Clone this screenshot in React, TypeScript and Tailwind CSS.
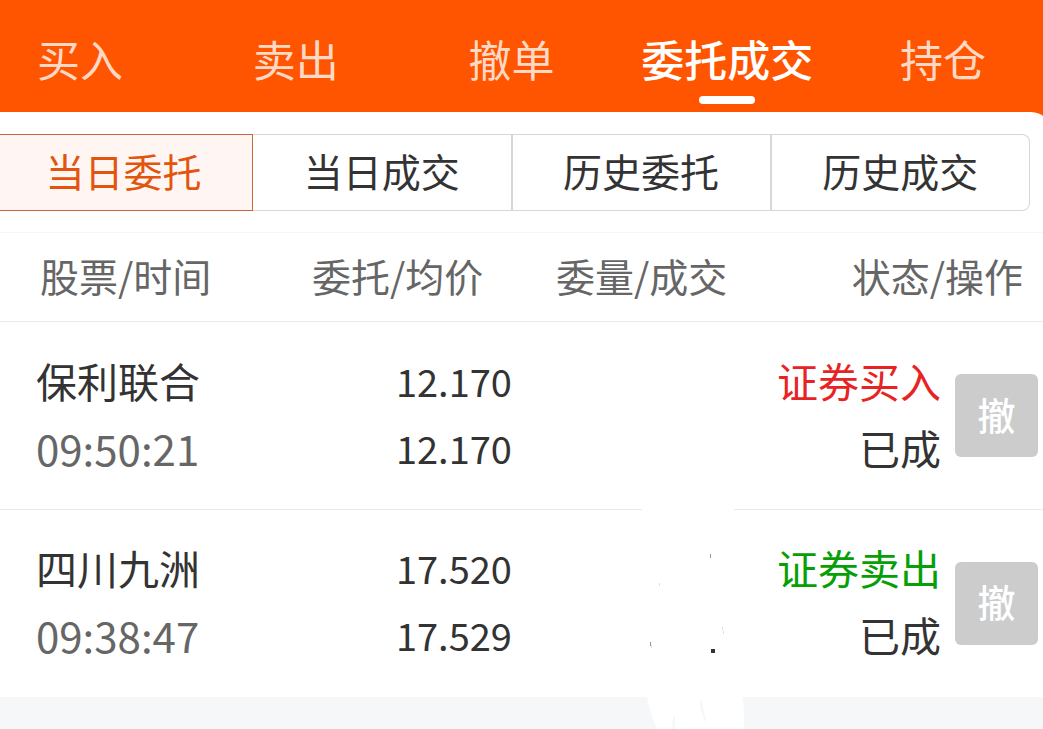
import clsx from 'clsx'

const tabs = ['买入', '卖出', '撤单', '委托成交', '持仓']
const subTabs = ['当日委托', '当日成交', '历史委托', '历史成交']

const orders = [
  {
    name: '保利联合',
    time: '09:50:21',
    price: '12.170',
    average: '12.170',
    side: '证券买入',
    buy: true,
    status: '已成',
    smudged: false,
  },
  {
    name: '四川九洲',
    time: '09:38:47',
    price: '17.520',
    average: '17.529',
    side: '证券卖出',
    buy: false,
    status: '已成',
    smudged: true,
  },
]

export default function App() {
  return (
    <div className="flex min-h-screen flex-col overflow-hidden bg-[#f6f7f9] font-['Noto_Sans_CJK_SC',sans-serif] text-[#333]">
      <TopTabs />
      <main className="bg-[#ff5500]">
        <div className="-mr-2 rounded-tr-[20px] bg-white pt-[22px] pr-2">
          <SubTabs />
          <OrderTable />
        </div>
      </main>
    </div>
  )
}

function TopTabs() {
  return (
    <nav className="bg-[#ff5500]">
      <div className="-mr-2 -ml-7 grid h-28 grid-cols-5 text-[43px] leading-[60px]">
        {tabs.map((label) => {
          const active = label === '委托成交'
          return (
            <button
              key={label}
              className={clsx(
                'flex flex-col items-center pt-7',
                active ? 'font-medium text-white' : 'text-[#ffd9c5]',
              )}
            >
              {label}
              {active && <span className="mt-2 h-2 w-14 rounded-full bg-white" />}
            </button>
          )
        })}
      </div>
    </nav>
  )
}

function SubTabs() {
  return (
    <div className="mr-[13px] -ml-1.5 flex h-[77px] text-[39px] leading-none">
      {subTabs.map((label, i) => (
        <button
          key={label}
          className={clsx(
            'flex-1 border pb-1',
            i === 0
              ? 'border-[#c9673a] bg-[#fff5f2] text-[#e2550f]'
              : 'border-l-0 border-[#d5d7d9]',
            i > 0 && i < 3 && 'border-r-2',
            i === 3 && 'rounded-r-lg',
          )}
        >
          {label}
        </button>
      ))}
    </div>
  )
}

function OrderTable() {
  return (
    <table className="mt-[21px] w-full table-fixed border-t border-[#f5f5f5]">
      <thead>
        <tr className="h-[89px] border-b border-[#ebebeb] text-[39px] leading-[56px] text-[#666]">
          <th className="w-[28%] pb-1 pl-10 text-left font-normal">股票/时间</th>
          <th className="w-[23%] pb-1 pl-5 text-left font-normal">委托/均价</th>
          <th className="w-[20%] pb-1 pl-6 text-left font-normal">委量/成交</th>
          <th className="pr-5 pb-1 text-right font-normal">状态/操作</th>
        </tr>
      </thead>
      <tbody className="text-[41px] leading-[67px]">
        {orders.map((order) => (
          <tr
            key={order.name}
            className="h-[188px] border-b border-[#ebebeb] last:h-[187px] last:border-0"
          >
            <td className="pb-1 pl-9">
              <div>{order.name}</div>
              <div className="text-[42px] text-[#666]">{order.time}</div>
            </td>
            <td className="pr-5 pb-1 text-right text-[38px]">
              <div>{order.price}</div>
              <div>{order.average}</div>
            </td>
            <td className="relative">{order.smudged && <Smudge />}</td>
            <td className="pr-[5px]">
              <div className="flex items-center justify-end gap-3.5">
                <div className="pb-1 text-right whitespace-nowrap">
                  <div className={order.buy ? 'text-[#e72424]' : 'text-[#06a006]'}>
                    {order.side}
                  </div>
                  <div>{order.status}</div>
                </div>
                <button className="size-[83px] shrink-0 rounded-md bg-[#ccc] pb-1 text-[38px] leading-none font-medium text-white">
                  撤
                </button>
              </div>
            </td>
          </tr>
        ))}
      </tbody>
    </table>
  )
}

// Rubbed-out amount: white strokes with a few leftover specks
function Smudge() {
  return (
    <svg
      aria-hidden="true"
      viewBox="0 0 110 229"
      className="absolute -top-2.5 left-[108px] h-[229px] w-[110px]"
    >
      <path d="M2 5h92v8H2z" fill="#fff" />
      <path d="M6 190h95q4 16 3 39H17Q9 213 6 190z" fill="#fff" />
      <path d="M61 197l6 30-7-19zM33 217h2v12h-3z" fill="#f6f7f9" />
      <path d="M70 54h1v4h-1zM10 142h1v4h-1z" fill="#999" />
      <path d="M19 83h1v3h-1zM82 127h1v3h-1zM83 131h1v3h-1zM11 145h1v3h-1z" fill="#ddd" />
      <path d="M71 149h4v4h-4z" fill="#333" />
    </svg>
  )
}
